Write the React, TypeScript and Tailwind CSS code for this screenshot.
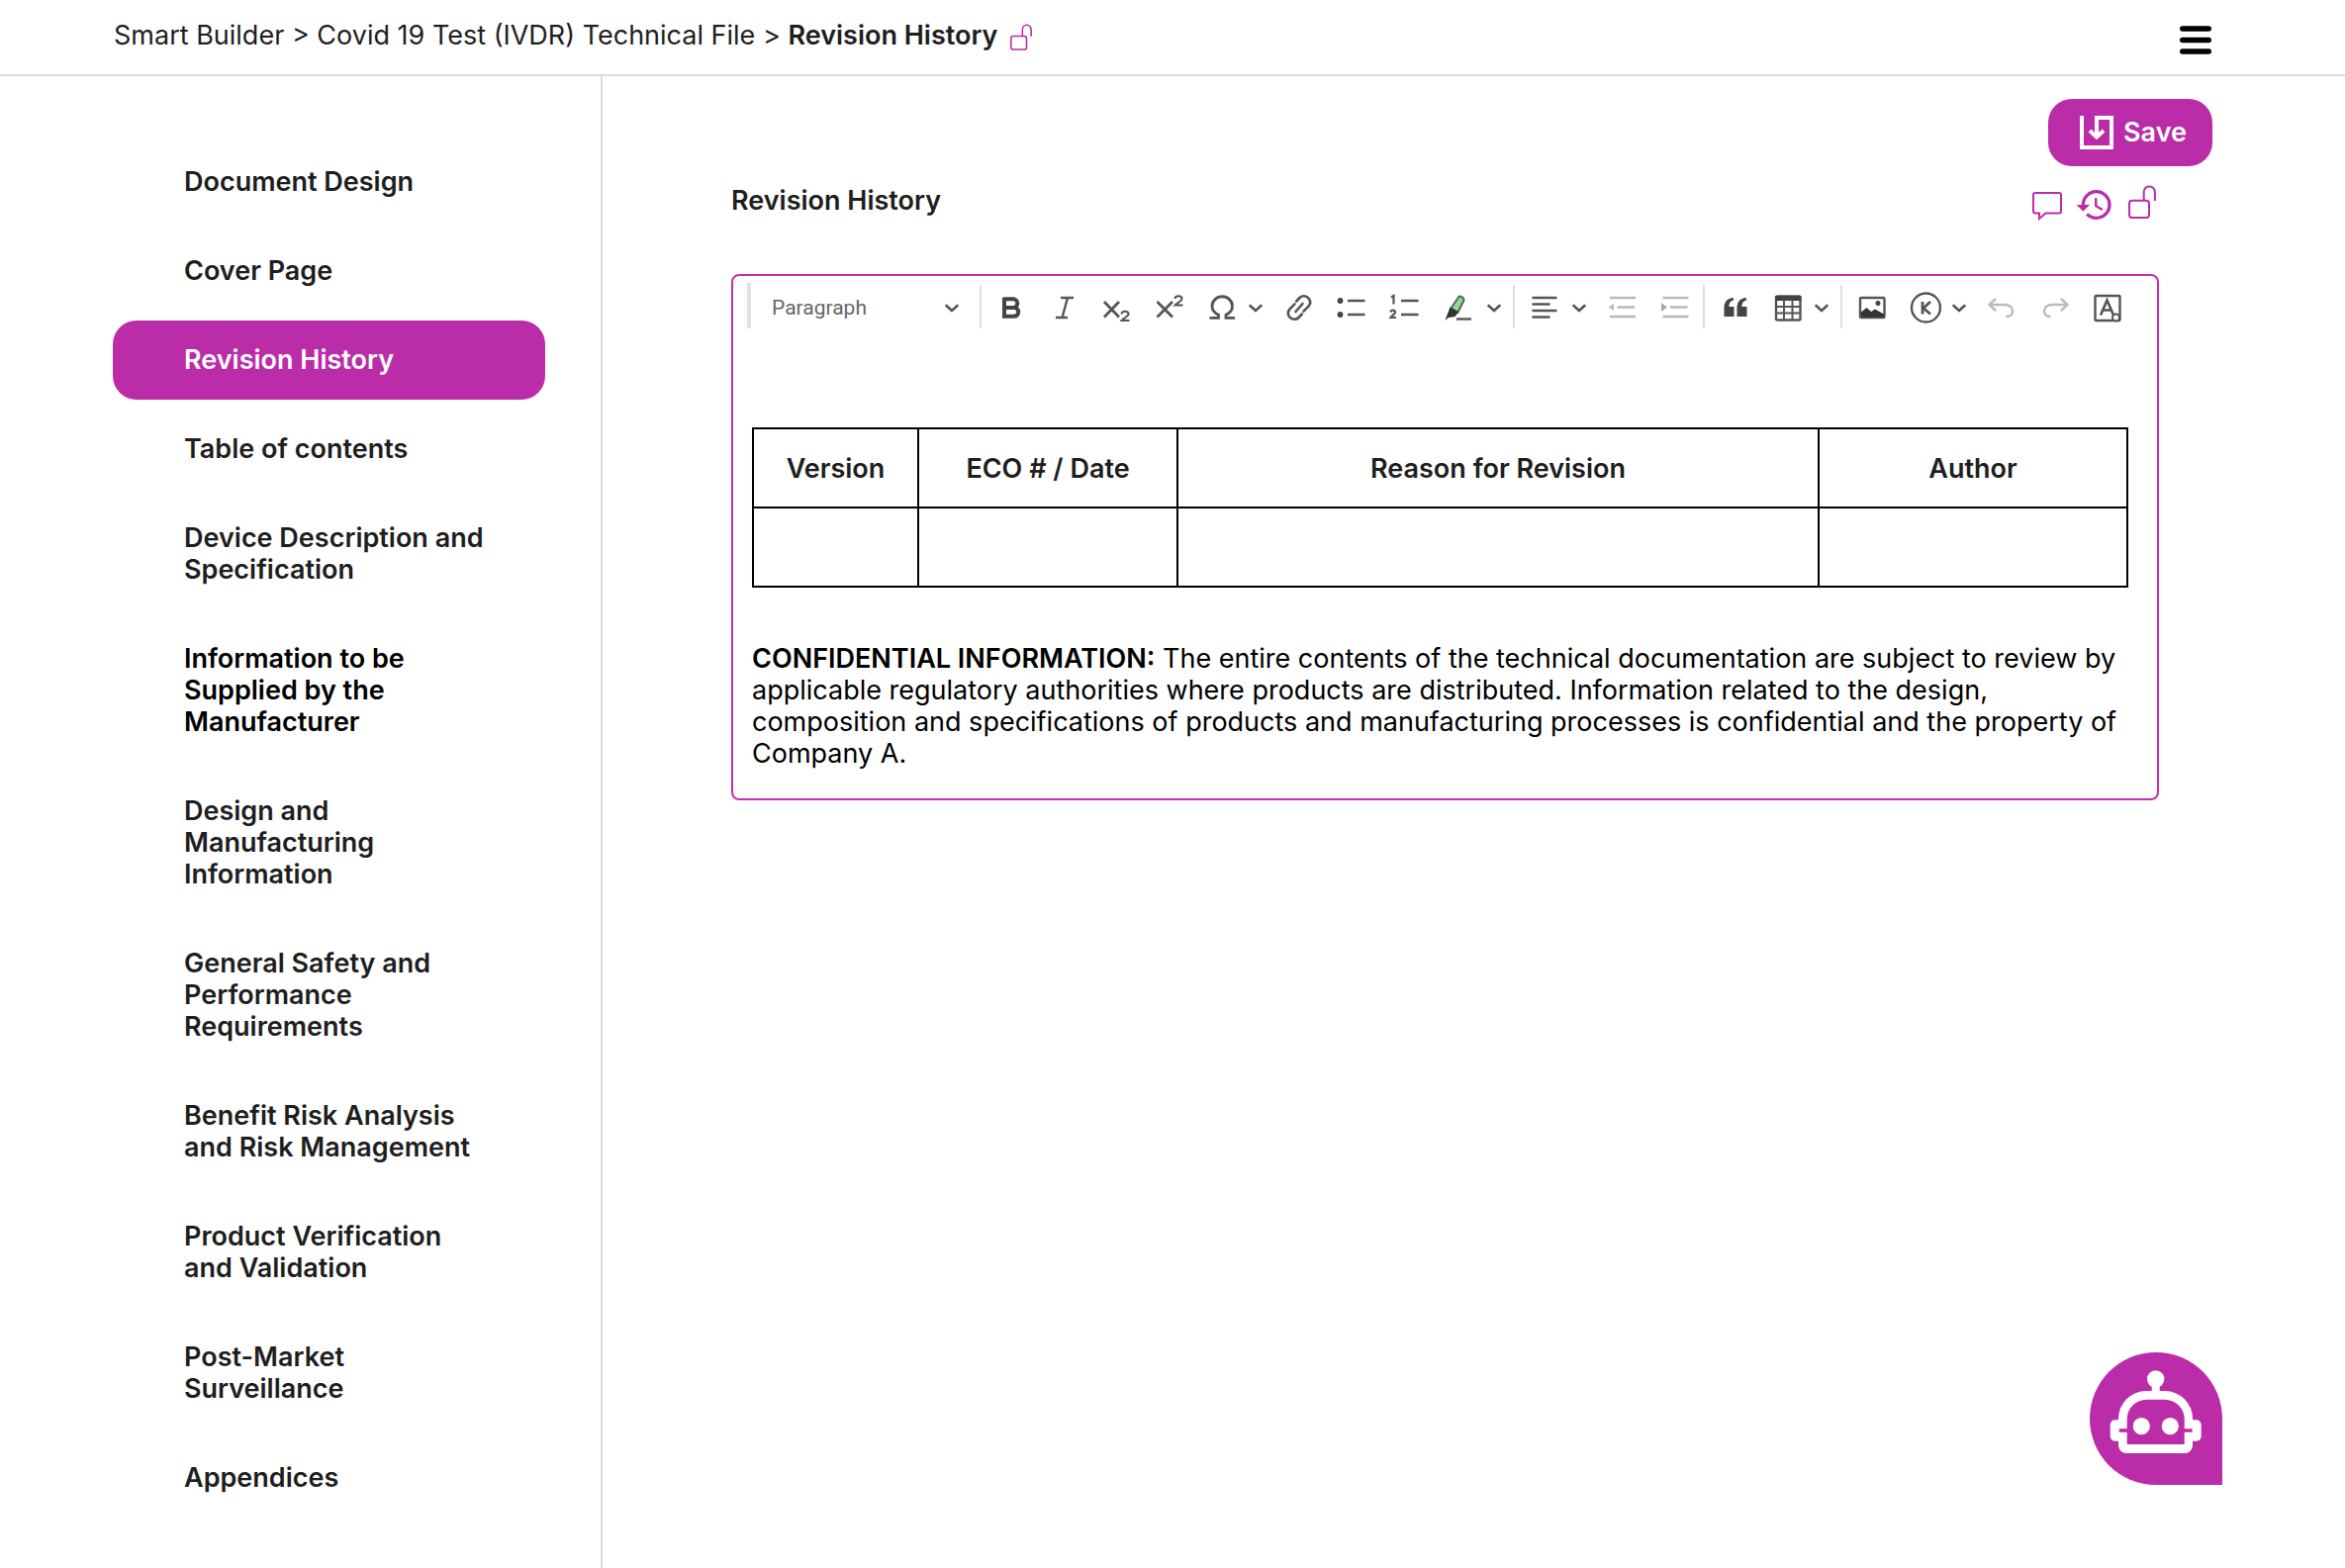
import type { ReactNode } from "react";
import { MdHistory } from "react-icons/md";

const sections = [
  { label: "Document Design" },
  { label: "Cover Page" },
  { label: "Revision History", active: true },
  { label: "Table of contents" },
  { label: "Device Description and Specification" },
  { label: "Information to be Supplied by the Manufacturer", strong: true },
  { label: "Design and Manufacturing Information" },
  { label: "General Safety and Performance Requirements" },
  { label: "Benefit Risk Analysis and Risk Management" },
  { label: "Product Verification and Validation" },
  { label: "Post-Market Surveillance" },
  { label: "Appendices" },
];

function LockOpen({ className }: { className: string }) {
  return (
    <svg className={className} viewBox="0 0 28 34" fill="none" stroke="currentColor" strokeWidth="2">
      <rect x="1" y="15.8" width="20" height="17.2" rx="3" />
      <path d="M15.7 15.5V7a5.6 5.6 0 0 1 11.2 0v9" />
    </svg>
  );
}

function Chevron() {
  return (
    <svg className="w-3.5 h-3.5" viewBox="0 0 14 14" fill="none" stroke="#555" strokeWidth="2.6" strokeLinecap="round">
      <path d="M1.5 5 7 10l5.5-5" />
    </svg>
  );
}

function Separator() {
  return <div className="ml-3 mr-[15px] h-11 w-0.5 self-end bg-[#e0e0e0]" />;
}

function Tool({ label, children, menu, wide }: { label: string; children: ReactNode; menu?: boolean; wide?: boolean }) {
  return (
    <button type="button" aria-label={label} className="flex h-8 items-center gap-[11px]">
      <svg
        className={wide ? "h-8 w-9" : "h-8 w-8"}
        viewBox={wide ? "-2 0 36 32" : "0 0 32 32"}
        fill="none"
        stroke="#555"
        strokeWidth="2.4"
      >
        {children}
      </svg>
      {menu && <Chevron />}
    </button>
  );
}

function Toolbar() {
  return (
    <div role="toolbar" aria-label="Formatting" className="flex flex-wrap items-center pl-3.5 pt-[7px]">
      <div className="h-[46px] w-1 bg-[#e3e3e3]" />
      <div className="relative ml-[21px] mr-[9px] flex items-center pt-1">
        <select
          aria-label="Text style"
          className="w-[189px] appearance-none bg-transparent font-[Roboto,sans-serif] text-[21px] leading-8 text-[#666]"
        >
          <option>Paragraph</option>
        </select>
        <span className="pointer-events-none absolute right-0">
          <Chevron />
        </span>
      </div>
      <Separator />
      <div className="flex gap-[21px] pt-1">
        <Tool label="Bold">
          <path
            d="M8 7.300h9a4.300 4.300 0 0 1 0 8.600H8M8 15.900h9.800a4.400 4.400 0 0 1 0 8.900H8zM8 5.500v21"
            stroke="#444"
            strokeWidth="4"
          />
        </Tool>
        <Tool label="Italic">
          <path d="M12 6h13M7 26h12M19 6 13.500 26" />
        </Tool>
        <Tool label="Subscript">
          <path d="M3 10 18 25.500M18 10 3 25.500" strokeWidth="2.8" />
          <path d="M20.500 22.500c0-3.600 7-3.600 7 0 0 2.500-5 4-7 6.500h8" strokeWidth="2" />
        </Tool>
        <Tool label="Superscript">
          <path d="M3.500 10 19 25.500M19 10 3.500 25.500" strokeWidth="2.8" />
          <path d="M21.500 7c0-3.600 7-3.600 7 0 0 2.500-5 4-7 6.500h8" strokeWidth="2" />
        </Tool>
        <Tool label="Special characters" menu>
          <path
            d="M3.500 26.300h9v-3C8 21 6 18 6 14.500a10 9.500 0 0 1 20.500 0c0 3.500-2 6.500-6.500 8.800v3h9"
            strokeWidth="2.800"
          />
        </Tool>
        <Tool label="Link">
          <g strokeWidth="2.6" strokeLinecap="round">
            <path d="M13.200 9.500 16.500 6a6.200 6.200 0 0 1 9 .3c2.200 2.600 2 6-.3 8.600l-4.700 4.800" />
            <path d="M18.800 22.500 15.500 26a6.200 6.200 0 0 1-9-.3c-2.200-2.600-2-6 .3-8.600l4.700-4.800" />
            <path d="m12.500 20 7-8" />
          </g>
        </Tool>
        <Tool label="Bulleted list">
          <path d="M12 9h17.500M12 23h17.500" />
          <circle cx="4.500" cy="9" r="2.900" fill="#444" stroke="none" />
          <circle cx="4.500" cy="23" r="2.900" fill="#444" stroke="none" />
        </Tool>
        <Tool label="Numbered list">
          <path d="M13 9h17.500M13 23h17.500" />
          <path
            d="M3 5.500 5.500 4v8.500M2.500 20.500c.3-2.600 4.600-2.600 4.600 0 0 2-2.600 2.800-4.600 5.500h5.500"
            strokeWidth="2.200"
          />
        </Tool>
        <Tool label="Highlight" menu wide>
          <path
            d="m8.500 16.500 7.500-11c1.500-2.200 6.500.5 5.300 3.500L15.500 20.500z"
            fill="#8fdc8c"
            stroke="#566"
            strokeWidth="2"
          />
          <path d="M7.500 15.500 16 20.500 12.500 25 6 26 2.500 29 4.500 23.500z" fill="#333" stroke="none" />
          <path d="M14 27.500h15" />
        </Tool>
      </div>
      <Separator />
      <div className="flex gap-[21px] pt-1">
        <Tool label="Alignment" menu>
          <path d="M2.500 6h25M2.500 12.500h18M2.500 19h25M2.500 25.500h18" />
        </Tool>
        <Tool label="Decrease indent">
          <g stroke="#b8b8b8">
            <path d="M3 6h26M10.500 15.500h17.500M3 25h26" />
            <path d="M7 12v7l-5.500-3.500z" fill="#b8b8b8" stroke="none" />
          </g>
        </Tool>
        <Tool label="Increase indent">
          <g stroke="#b8b8b8">
            <path d="M3.500 6h26M11 15.500h17.500M3.500 25h26" />
            <path d="M2 11v9l6-4.500z" fill="#a8a8a8" stroke="none" />
          </g>
        </Tool>
      </div>
      <Separator />
      <div className="flex gap-[21px] pt-1">
        <Tool label="Block quote">
          <g fill="#444" stroke="none">
            <path d="M4.500 25V16.500C4.500 10 7.500 6.500 14 6v2.500c-3 .6-4.500 2.800-4.700 6.500H14.500v10z" />
            <path d="M17.500 25V16.500C17.500 10 20.500 6.500 27 6v2.500c-3 .6-4.500 2.800-4.700 6.500H27.500v10z" />
          </g>
        </Tool>
        <Tool label="Insert table" menu>
          <rect x="4" y="4.500" width="24.500" height="24" rx="1.500" strokeWidth="2.400" />
          <path d="M3 4h26.500v5H3z" fill="#444" stroke="none" />
          <path d="M12 8v20M20.500 8v20M4 15h24M4 21.500h24" strokeWidth="2" />
        </Tool>
      </div>
      <Separator />
      <div className="flex gap-[21px] pt-1">
        <Tool label="Insert image">
          <rect x="3" y="6" width="24.500" height="20" rx="1" />
          <path d="M4 25.500v-5L9.500 16l4.500 4 4-2.500 9 5v3z" fill="#333" stroke="none" />
          <circle cx="21" cy="11.500" r="2.500" fill="#444" stroke="none" />
        </Tool>
        <Tool label="Keywords" menu>
          <circle cx="16.500" cy="16" r="14.500" />
          <path d="M13 10v12.500M21 10l-7 6.500 7 6" strokeWidth="2.800" />
        </Tool>
        <Tool label="Undo">
          <path
            d="m8.500 7.500-6 5.500 6 5.500M3 13h15c5 0 8 3 8 6.500S24 24.500 20.500 25"
            stroke="#bbb"
            strokeLinecap="round"
          />
        </Tool>
        <Tool label="Redo">
          <path
            d="m22.500 7.500 6 5.500-6 5.500M28 13H13c-5 0-8 3-8 6.500S7 24.500 10.500 25"
            stroke="#bbb"
            strokeLinecap="round"
          />
        </Tool>
        <Tool label="Text settings">
          <rect x="3.500" y="4" width="25" height="25" rx="1" />
          <path d="m9 23.500 6.500-15 6.500 15M11 18.500h9" strokeWidth="2.600" />
          <circle cx="24.500" cy="26" r="3.500" fill="#fff" strokeWidth="2" />
        </Tool>
      </div>
    </div>
  );
}

function ChatBot() {
  return (
    <button
      type="button"
      aria-label="Open assistant"
      className="fixed bottom-[84px] right-[124px] rounded-full rounded-br-none bg-[#bb2ca8]"
    >
      <svg className="h-[134px] w-[134px]" viewBox="0 0 134 134" fill="#fff">
        <circle cx="66.700" cy="27" r="8.700" />
        <path d="M62.700 33h8v8h-8z" />
        <rect x="20.700" y="68.300" width="92" height="21.400" rx="5" />
        <path d="M57 39h19a28 28 0 0 1 28 28v27a8 8 0 0 1-8 8H37a8 8 0 0 1-8-8V67a28 28 0 0 1 28-28z" />
        <path
          d="M57.700 47.700h18a20 20 0 0 1 20 20V93h-58V67.700a20 20 0 0 1 20-20zM29.700 77.300h8v3.400h-8zM95.700 77.300h8v3.400h-8z"
          fill="#bb2ca8"
        />
        <circle cx="52.300" cy="74.700" r="8.600" />
        <circle cx="81.300" cy="74.700" r="8.600" />
      </svg>
    </button>
  );
}

export default function App() {
  return (
    <div className="flex min-h-screen flex-col bg-white font-[Inter,sans-serif] text-[27px] leading-8 text-[#1e1e1e]">
      <header className="flex items-start justify-between border-b-2 border-[#dcdcdc] pb-5 pl-[115px] pr-[135px] pt-5">
        <nav aria-label="Breadcrumb" className="flex items-start">
          <p>
            <a href="#builder">Smart Builder</a> &gt; <a href="#file">Covid 19 Test (IVDR) Technical File</a> &gt;{" "}
            <span className="font-semibold">Revision History</span>
          </p>
          <LockOpen className="ml-3 mt-1 h-[27px] w-[22px] text-[#bb2ca8]" />
        </nav>
        <button type="button" aria-label="Menu" className="mt-1.5">
          <svg className="h-[29px] w-8" viewBox="0 0 32 29" stroke="#000" strokeWidth="5.500" strokeLinecap="round">
            <path d="M2.750 2.900h26.500M2.750 14.500h26.500M2.750 26.100h26.500" />
          </svg>
        </button>
      </header>

      <div className="flex flex-1">
        <aside className="w-[609px] shrink-0 border-r-2 border-[#dcdcdc] pl-[114px] pr-14 pt-[67px]">
          <nav aria-label="Sections" className="flex flex-col gap-2.5 font-semibold">
            {sections.map((s) => (
              <a
                key={s.label}
                href="#section"
                aria-current={s.active ? "page" : undefined}
                className={
                  s.active
                    ? "rounded-3xl bg-[#bb2ca8] py-6 pl-[72px] pr-[60px] text-white"
                    : s.strong
                      ? "py-6 pl-[72px] pr-[60px] text-black"
                      : "py-6 pl-[72px] pr-[60px]"
                }
              >
                {s.label}
              </a>
            ))}
          </nav>
        </aside>

        <main className="min-w-0 flex-1">
          <div className="flex justify-end pr-[134px] pt-[23px]">
            <button
              type="button"
              className="flex h-[68px] items-center gap-2.5 rounded-3xl bg-[#bb2ca8] pl-8 pr-[26px] font-semibold text-white"
            >
              <svg className="h-[34px] w-[34px]" viewBox="0 0 34 34" fill="none" stroke="#fff" strokeWidth="4">
                <path d="M2 0v32h30V2H17v19" />
                <path d="m10 15 7 6.500 7-6.500" />
              </svg>
              Save
            </button>
          </div>

          <div className="pl-[130px] pr-[188px]">
            <div className="mt-[19px] flex items-start justify-between">
              <h1 className="font-semibold">Revision History</h1>
              <div className="flex items-start text-[#bb2ca8]">
                <button type="button" aria-label="Comments">
                  <svg className="h-9 w-[30px]" viewBox="0 0 30 36" fill="none" stroke="currentColor" strokeWidth="2">
                    <path d="M3 8h24a2 2 0 0 1 2 2v16.500a2 2 0 0 1-2 2H13.500L7 34v-5.500H3a2 2 0 0 1-2-2V10a2 2 0 0 1 2-2z" />
                  </svg>
                </button>
                <button type="button" aria-label="History" className="ml-[13px]">
                  <MdHistory size={40} />
                </button>
                <button type="button" aria-label="Unlock" className="ml-3.5 mr-[3px]">
                  <LockOpen className="h-[34px] w-7" />
                </button>
              </div>
            </div>

            <section aria-label="Editor" className="mt-[50px] rounded-lg border-2 border-[#c42fb1]">
              <Toolbar />
              <div className="pb-[29px] pl-[19px] pr-[29px] pt-[100px]">
                <table className="w-full table-fixed border-collapse border-2 border-black">
                  <colgroup>
                    <col className="w-[167px]" />
                    <col className="w-[262px]" />
                    <col />
                    <col className="w-[312px]" />
                  </colgroup>
                  <thead>
                    <tr className="h-20">
                      {["Version", "ECO # / Date", "Reason for Revision", "Author"].map((h) => (
                        <th key={h} scope="col" className="border-2 border-black pt-0.5 font-semibold">
                          {h}
                        </th>
                      ))}
                    </tr>
                  </thead>
                  <tbody>
                    <tr className="h-20">
                      <td className="border-2 border-black" />
                      <td className="border-2 border-black" />
                      <td className="border-2 border-black" />
                      <td className="border-2 border-black" />
                    </tr>
                  </tbody>
                </table>
                <p className="mt-14 text-black">
                  <strong className="font-semibold">CONFIDENTIAL INFORMATION:</strong> The entire contents of the
                  technical documentation are subject to review by applicable regulatory authorities where products are
                  distributed. Information related to the design, composition and specifications of products and
                  manufacturing processes is confidential and the property of Company A.
                </p>
              </div>
            </section>
          </div>
        </main>
      </div>
      <ChatBot />
    </div>
  );
}
